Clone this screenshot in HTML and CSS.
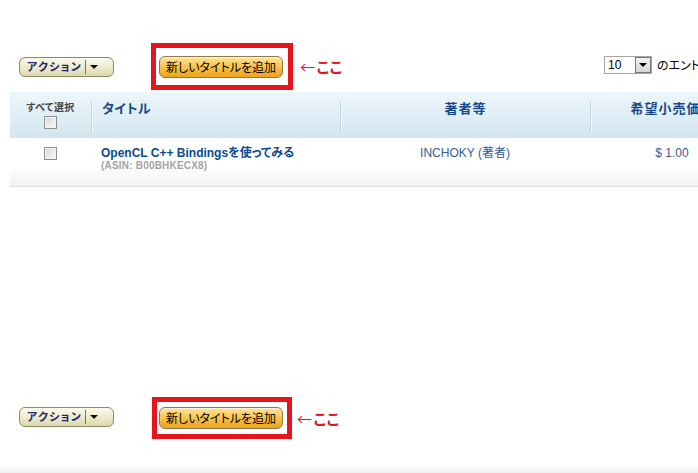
FILE: index.html
```html
<!DOCTYPE html>
<html lang="ja">
<head>
<meta charset="utf-8">
<title>タイトル一覧</title>
<link rel="stylesheet" href="styles.css">
</head>
<body>
<div class="page">
  <div class="toolbar top">
    <div class="action"><span class="action-label">アクション</span><span class="action-sep"></span><span class="action-arrow"></span></div>
    <div class="redbox">
      <div class="addbtn">新しいタイトルを追加</div>
    </div>
    <div class="here"><span class="arrow">←</span>ここ</div>
    <div class="pager">
      <div class="select"><span class="select-val">10</span><span class="select-btn"><span class="select-arrow"></span></span></div>
      <span class="pager-text">のエントリーを表示</span>
    </div>
  </div>

  <div class="table">
    <div class="thead">
      <div class="th th-check"><span>すべて選択</span><span class="cb"></span></div>
      <div class="th th-title">タイトル</div>
      <div class="th th-center">著者等</div>
      <div class="th th-center">希望小売価格</div>
    </div>
    <div class="tr">
      <div class="td td-check"><span class="cb"></span></div>
      <div class="td td-title">
        <div class="book">OpenCL C++ Bindingsを使ってみる</div>
        <div class="asin">(ASIN: B00BHKECX8)</div>
      </div>
      <div class="td td-center author">INCHOKY (著者)</div>
      <div class="td td-center price">$ 1.00</div>
    </div>
  </div>

  <div class="toolbar bottom">
    <div class="action"><span class="action-label">アクション</span><span class="action-sep"></span><span class="action-arrow"></span></div>
    <div class="redbox">
      <div class="addbtn">新しいタイトルを追加</div>
    </div>
    <div class="here"><span class="arrow">←</span>ここ</div>
  </div>

  <div class="footer"></div>
</div>
</body>
</html>
```

FILE: styles.css
```css
html, body {
  margin: 0;
  padding: 0;
  background: #fff;
}
body {
  width: 698px;
  height: 473px;
  overflow: hidden;
  font-family: "Liberation Sans", Arial, "Noto Sans CJK JP", sans-serif;
  font-feature-settings: "palt";
  color: #000;
}
.page {
  padding-top: 43px;
}

/* toolbars */
.toolbar {
  display: flex;
  align-items: center;
  padding-left: 19px;
}
.toolbar.top {
  height: 47px;
}
.toolbar.bottom {
  margin-top: 210px;
  height: 41px;
}

.action {
  box-sizing: border-box;
  width: 95px;
  height: 20px;
  flex-shrink: 0;
  border: 1px solid #8c8963;
  border-radius: 6px;
  background: linear-gradient(#fbfaeb 0%, #efedd0 45%, #dcd8ad 100%);
  display: flex;
  align-items: center;
  padding-left: 7px;
}
.toolbar.bottom .action {
  margin-top: -1px;
}
.action-label {
  font-size: 11px;
  font-weight: bold;
  color: #24246e;
  letter-spacing: 1.3px;
  line-height: 12px;
}
.action-sep {
  width: 1px;
  height: 14px;
  background: #77755a;
  margin-left: 3px;
  margin-right: 4px;
}
.action-arrow {
  width: 0;
  height: 0;
  border-left: 4px solid transparent;
  border-right: 4px solid transparent;
  border-top: 4px solid #111;
}

.redbox {
  flex-shrink: 0;
  border: 5px solid #e8141c;
  margin-left: 37px;
  padding: 8px 5px 7px 3px;
}
.toolbar.bottom .redbox {
  margin-left: 38px;
  padding: 5px 4px 5px 2px;
}
.addbtn {
  box-sizing: border-box;
  width: 124px;
  height: 22px;
  border: 1px solid #8b7a4f;
  border-radius: 6px;
  background: linear-gradient(#fee6a0 0%, #fbcb58 40%, #f4b030 75%, #eea523 100%);
  box-shadow: inset 0 1px 0 rgba(255,255,255,0.6);
  font-family: "Noto Sans CJK JP", sans-serif;
  font-size: 12px;
  line-height: 20px;
  letter-spacing: 0;
  text-align: center;
  color: #000;
}
.here {
  flex-shrink: 0;
  margin-left: 7px;
  color: #e8141c;
  font-family: "Noto Sans CJK JP", sans-serif;
  font-size: 15px;
  font-weight: bold;
  line-height: 16px;
  letter-spacing: 0.5px;
}
.toolbar.bottom .here {
  margin-left: 5px;
  margin-top: 2px;
}
.here .arrow {
  font-weight: normal;
  margin-right: 1px;
}

.pager {
  margin-left: auto;
  width: 94px;
  flex-shrink: 0;
  display: flex;
  align-items: center;
  white-space: nowrap;
  overflow: hidden;
  margin-top: -4px;
}
.select {
  box-sizing: border-box;
  width: 48px;
  height: 18px;
  border: 1px solid #a6a6a6;
  display: flex;
  align-items: center;
  justify-content: space-between;
  flex-shrink: 0;
}
.select-val {
  font-size: 12px;
  padding-left: 3px;
  color: #000;
}
.select-btn {
  box-sizing: border-box;
  width: 16px;
  height: 16px;
  border: 1px solid #777;
  background: linear-gradient(#f4f4f4, #d6d6d6);
  display: flex;
  align-items: center;
  justify-content: center;
}
.select-arrow {
  width: 0;
  height: 0;
  border-left: 4px solid transparent;
  border-right: 4px solid transparent;
  border-top: 4px solid #000;
}
.pager-text {
  margin-left: 5px;
  font-family: "Noto Sans CJK JP", sans-serif;
  font-size: 12px;
  color: #000;
}

/* table */
.table {
  margin-top: 2px;
  margin-left: 10px;
  width: 744px;
}
.thead, .tr {
  display: grid;
  grid-template-columns: 81px 249px 250px 164px;
}
.thead {
  height: 46px;
  background: linear-gradient(#edf7fb 0%, #e0eef6 50%, #d2e4ef 100%);
}
.th {
  margin: 9px 0 5px;
  border-left: 1px solid #bcd6e6;
  box-shadow: inset 1px 0 0 #f3f9fc;
  font-family: "Liberation Sans", "Noto Sans CJK JP", sans-serif;
  font-size: 13px;
  font-weight: bold;
  color: #16498c;
  line-height: 14px;
  padding-top: 1px;
}
.th-check {
  border-left: none;
  box-shadow: none;
  display: flex;
  flex-direction: column;
  align-items: center;
  font-size: 10px;
  color: #444;
  line-height: 12px;
  letter-spacing: 0.4px;
  padding-top: 1px;
}
.th-check .cb {
  margin-top: 2px;
}
.th-title {
  padding-left: 10px;
  letter-spacing: 0.5px;
}
.th-center {
  text-align: center;
  letter-spacing: 1px;
}

.tr {
  height: 48px;
  border-bottom: 1px solid #e2e2e2;
  background: linear-gradient(#fff 0%, #fff 58%, #f2f2f2 100%);
}
.td {
  padding-top: 8px;
  font-size: 12px;
  line-height: 14px;
}
.td-check {
  display: flex;
  justify-content: center;
}
.td-check .cb {
  margin-top: 1px;
}
.td-title {
  padding-left: 10px;
}
.book {
  font-weight: bold;
  color: #0b4a8f;
}
.asin {
  font-size: 10px;
  font-weight: bold;
  color: #a3a3a3;
  line-height: 12px;
  letter-spacing: 0.2px;
}
.td-center {
  text-align: center;
}
.author, .price {
  color: #385c92;
}

.cb {
  box-sizing: border-box;
  display: block;
  width: 13px;
  height: 13px;
  border: 1px solid #8e8e8e;
  background: linear-gradient(135deg, #d6d6d6 0%, #ececec 60%, #f7f7f7 100%);
  box-shadow: inset 0 0 0 1px #f5f5f5;
}

.footer {
  margin-top: 29px;
  height: 6px;
  background: linear-gradient(#fbfbfb, #efefef);
}
```
